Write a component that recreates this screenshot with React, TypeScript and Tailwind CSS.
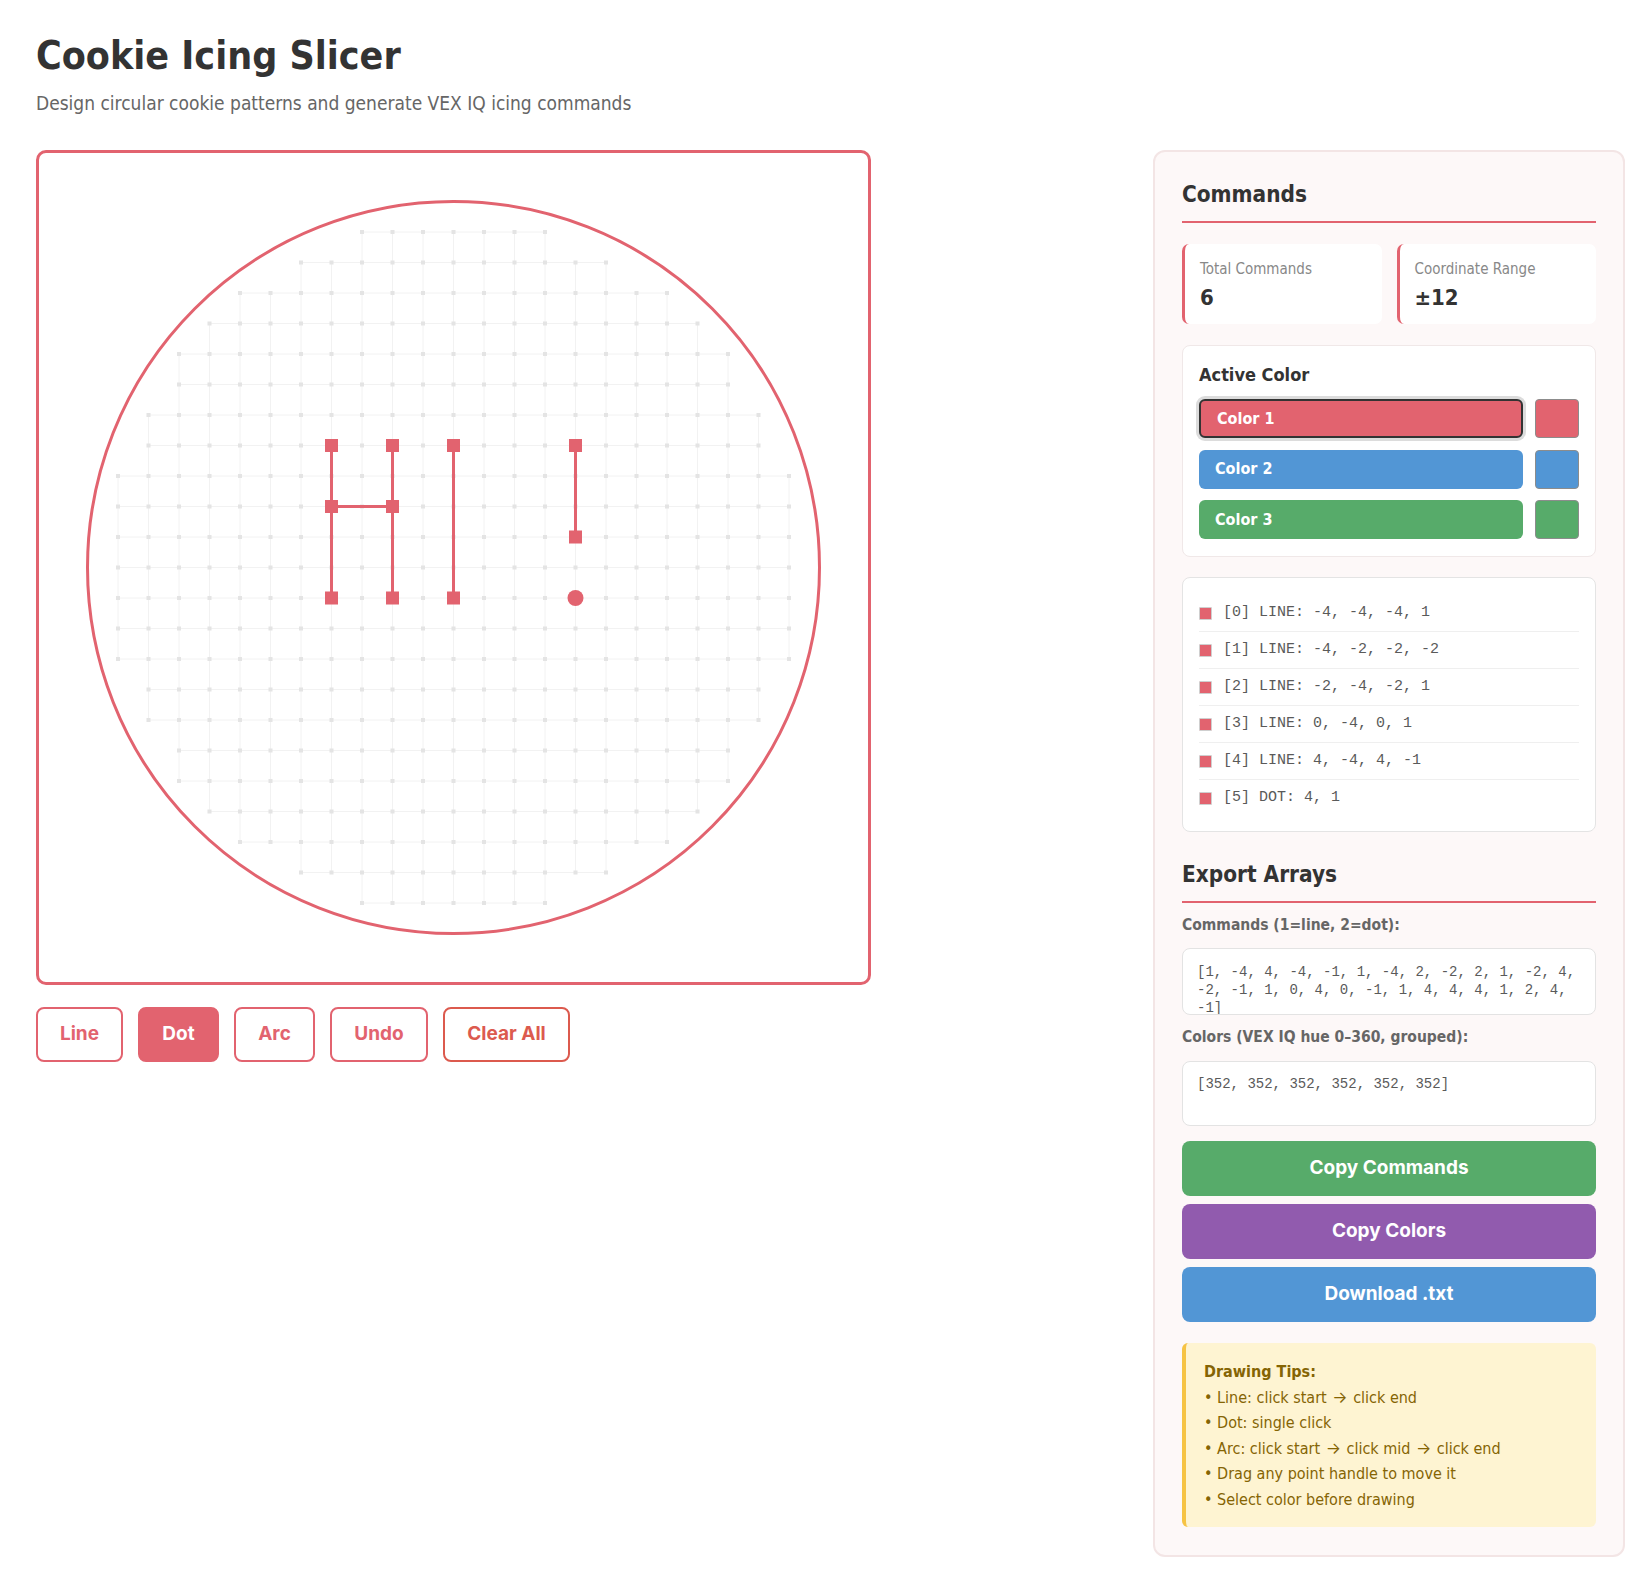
import React from "react";

const RED = "#e2636f";
const UNIT = 30.5;
const SIZE = 829;
const MID = SIZE / 2;

const SANS = "[font-family:'DejaVu_Sans_Condensed','DejaVu_Sans',sans-serif]";
const UI = "[font-family:Inter,'Noto_Sans',sans-serif]";
const MONO = "[font-family:'Liberation_Mono','Courier_New',monospace]";
const ARROW = "[font-family:Inter,'DejaVu_Sans',sans-serif]";

type Pt = [number, number];
type Shape = { kind: "LINE"; a: Pt; b: Pt } | { kind: "DOT"; p: Pt };

const shapes: Shape[] = [
  { kind: "LINE", a: [-4, -4], b: [-4, 1] },
  { kind: "LINE", a: [-4, -2], b: [-2, -2] },
  { kind: "LINE", a: [-2, -4], b: [-2, 1] },
  { kind: "LINE", a: [0, -4], b: [0, 1] },
  { kind: "LINE", a: [4, -4], b: [4, -1] },
  { kind: "DOT", p: [4, 1] },
];

const listRows = [
  "[0] LINE: -4, -4, -4, 1",
  "[1] LINE: -4, -2, -2, -2",
  "[2] LINE: -2, -4, -2, 1",
  "[3] LINE: 0, -4, 0, 1",
  "[4] LINE: 4, -4, 4, -1",
  "[5] DOT: 4, 1",
];

const commandArray =
  "[1, -4, 4, -4, -1, 1, -4, 2, -2, 2, 1, -2, 4, -2, -1, 1, 0, 4, 0, -1, 1, 4, 4, 4, 1, 2, 4, -1]";
const colorArray = "[352, 352, 352, 352, 352, 352]";

const toPx = (v: number) => MID + v * UNIT;
const inside = (x: number, y: number) => x * x + y * y <= 132;

function CookieCanvas() {
  const pts: Pt[] = [];
  for (let y = -11; y <= 11; y++) {
    for (let x = -11; x <= 11; x++) {
      if (inside(x, y)) pts.push([x, y]);
    }
  }
  const handles: Pt[] = [];
  shapes.forEach((s) => {
    if (s.kind === "LINE") handles.push(s.a, s.b);
  });

  return (
    <svg width={SIZE} height={SIZE} className="block">
      <g stroke="#f2f2f2" strokeWidth={1}>
        {pts.map(([x, y]) => (
          <React.Fragment key={`g${x}_${y}`}>
            {inside(x + 1, y) && <line x1={toPx(x)} y1={toPx(y)} x2={toPx(x + 1)} y2={toPx(y)} />}
            {inside(x, y + 1) && <line x1={toPx(x)} y1={toPx(y)} x2={toPx(x)} y2={toPx(y + 1)} />}
          </React.Fragment>
        ))}
      </g>
      <g fill="#e4e4e4">
        {pts.map(([x, y]) => (
          <rect key={`d${x}_${y}`} x={toPx(x) - 2} y={toPx(y) - 2} width={4} height={4} />
        ))}
      </g>
      <circle cx={MID} cy={MID} r={12 * UNIT} fill="none" stroke={RED} strokeWidth={3} />
      <g stroke={RED} strokeWidth={3} strokeLinecap="butt">
        {shapes.map((s, i) =>
          s.kind === "LINE" ? (
            <line key={`s${i}`} x1={toPx(s.a[0])} y1={toPx(s.a[1])} x2={toPx(s.b[0])} y2={toPx(s.b[1])} />
          ) : null
        )}
      </g>
      <g fill={RED}>
        {handles.map(([x, y], i) => (
          <rect key={`h${i}`} x={toPx(x) - 6.5} y={toPx(y) - 6.5} width={13} height={13} />
        ))}
        {shapes.map((s, i) =>
          s.kind === "DOT" ? <circle key={`p${i}`} cx={toPx(s.p[0])} cy={toPx(s.p[1])} r={8} /> : null
        )}
      </g>
    </svg>
  );
}

function ToolButton({ label, active, width, danger }: { label: string; active?: boolean; width: string; danger?: boolean }) {
  const base = `h-[55px] rounded-[8px] border-2 text-[19px] font-bold ${UI} flex items-center justify-center ${width}`;
  if (active) return <button className={`${base} bg-[#e2636f] border-[#e2636f] text-white`}>{label}</button>;
  if (danger) return <button className={`${base} bg-white border-[#dc5a4e] text-[#dc5a4e]`}>{label}</button>;
  return <button className={`${base} bg-white border-[#e2636f] text-[#e2636f]`}>{label}</button>;
}

function PanelHeading({ children, className }: { children: React.ReactNode; className?: string }) {
  return (
    <h2
      className={`text-[22.4px] leading-[27px] font-bold text-[#333] pb-[13px] border-b-2 border-[#e2636f] ${className ?? ""}`}
    >
      {children}
    </h2>
  );
}

function StatCard({ label, value }: { label: string; value: string }) {
  return (
    <div className="bg-white rounded-[7px] border-l-[3px] border-[#e2636f] pl-[15px] pt-[16px] pb-[13px]">
      <div className="text-[15px] leading-[18px] text-[#888]">{label}</div>
      <div className="mt-[7px] text-[22px] leading-[26px] font-bold text-[#333]">{value}</div>
    </div>
  );
}

function ColorRow({ label, bg, selected }: { label: string; bg: string; selected?: boolean }) {
  return (
    <div className="flex gap-[12px]">
      <div
        className={`flex-1 h-[39px] rounded-[6px] flex items-center pl-[16px] text-white text-[16px] font-bold ${
          selected ? "border-2 border-[#333] shadow-[0_0_0_3px_#dcdcdc] pl-[14px]" : ""
        }`}
        style={{ backgroundColor: bg }}
      >
        {label}
      </div>
      <div className="w-[44px] h-[39px] rounded-[4px] border border-[#8c8c8c]" style={{ backgroundColor: bg }} />
    </div>
  );
}

function Arrow() {
  return <span className={`${ARROW} mx-[1px]`}>→</span>;
}

export default function App() {
  return (
    <div className={`min-h-screen bg-white text-[#333] pl-[36px] pr-[13px] pt-[32px] pb-[30px] ${SANS}`}>
      <h1 className="text-[39px] leading-[48px] font-bold text-[#333]">Cookie Icing Slicer</h1>
      <p className="mt-[11px] text-[19px] leading-[24px] text-[#666]">
        Design circular cookie patterns and generate VEX IQ icing commands
      </p>

      <div className="mt-[35px] flex justify-between items-start">
        <div className="w-[835px]">
          <div className="w-[835px] h-[835px] rounded-[10px] border-[3px] border-[#e2636f] bg-white overflow-hidden">
            <CookieCanvas />
          </div>
          <div className="mt-[22px] flex gap-[15px]">
            <ToolButton label="Line" width="w-[87px]" />
            <ToolButton label="Dot" width="w-[81px]" active />
            <ToolButton label="Arc" width="w-[81px]" />
            <ToolButton label="Undo" width="w-[98px]" />
            <ToolButton label="Clear All" width="w-[127px]" danger />
          </div>
        </div>

        <aside className="w-[472px] rounded-[12px] border-2 border-[#f3e5e5] bg-[#fdf8f8] px-[27px] pt-[29px] pb-[28px]">
          <PanelHeading>Commands</PanelHeading>

          <div className="mt-[21px] grid grid-cols-2 gap-[15px]">
            <StatCard label="Total Commands" value="6" />
            <StatCard label="Coordinate Range" value="±12" />
          </div>

          <div className="mt-[21px] bg-white rounded-[8px] border border-[#f0e8e8] px-[16px] pt-[17px] pb-[17px]">
            <div className="text-[18px] leading-[24px] font-bold text-[#333]">Active Color</div>
            <div className="mt-[12px] flex flex-col gap-[11.5px]">
              <ColorRow label="Color 1" bg="#e2636f" selected />
              <ColorRow label="Color 2" bg="#5296d5" />
              <ColorRow label="Color 3" bg="#57ab6a" />
            </div>
          </div>

          <div className="mt-[20px] bg-white rounded-[8px] border border-[#e4e4e4] px-[16px] pt-[17px] pb-[15px]">
            {listRows.map((row, i) => (
              <div
                key={row}
                className={`flex items-center h-[36px] ${i < listRows.length - 1 ? "border-b border-[#efefef] h-[37px]" : ""}`}
              >
                <span className="w-[13px] h-[13px] bg-[#e2636f] border border-[#cfcfcf] rounded-[1px]" />
                <span className={`ml-[11px] text-[15px] leading-[20px] text-[#5a5a5a] ${MONO}`}>{row}</span>
              </div>
            ))}
          </div>

          <PanelHeading className="mt-[29px]">Export Arrays</PanelHeading>

          <div className="mt-[13px] text-[15.5px] leading-[19px] font-bold text-[#666]">Commands (1=line, 2=dot):</div>
          <div
            className={`mt-[13px] h-[67px] overflow-hidden bg-white rounded-[8px] border border-[#e3e3e3] px-[14px] pt-[14px] text-[14px] leading-[18px] text-[#5a5a5a] whitespace-pre-wrap ${MONO}`}
          >
            {commandArray}
          </div>

          <div className="mt-[13px] text-[15.5px] leading-[19px] font-bold text-[#666]">
            Colors (VEX IQ hue 0–360, grouped):
          </div>
          <div
            className={`mt-[14px] h-[65px] overflow-hidden bg-white rounded-[8px] border border-[#e3e3e3] px-[14px] pt-[13px] text-[14px] leading-[18px] text-[#5a5a5a] whitespace-pre-wrap ${MONO}`}
          >
            {colorArray}
          </div>

          <div className="mt-[15px] flex flex-col gap-[8px]">
            <button className={`h-[55px] rounded-[8px] bg-[#57ab6a] text-white text-[19px] font-bold ${UI}`}>
              Copy Commands
            </button>
            <button className={`h-[55px] rounded-[8px] bg-[#915bae] text-white text-[19px] font-bold ${UI}`}>
              Copy Colors
            </button>
            <button className={`h-[55px] rounded-[8px] bg-[#5296d5] text-white text-[19px] font-bold ${UI}`}>
              Download .txt
            </button>
          </div>

          <div className="mt-[21px] rounded-[6px] bg-[#fef4d2] border-l-4 border-[#f6c344] pl-[18px] pr-[16px] pt-[16px] pb-[15px] text-[16px] leading-[25.5px] text-[#856404]">
            <div className="font-bold">Drawing Tips:</div>
            <div>
              • Line: click start <Arrow /> click end
            </div>
            <div>• Dot: single click</div>
            <div>
              • Arc: click start <Arrow /> click mid <Arrow /> click end
            </div>
            <div>• Drag any point handle to move it</div>
            <div>• Select color before drawing</div>
          </div>
        </aside>
      </div>
    </div>
  );
}
